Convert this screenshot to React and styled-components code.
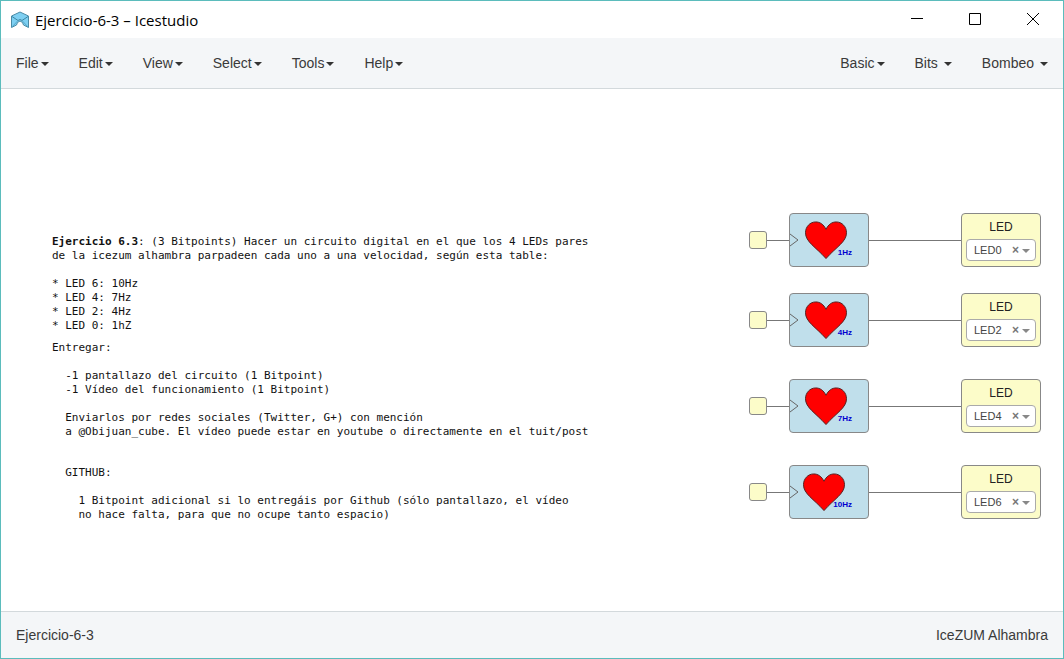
import React, { useState } from 'react';
import styled, { createGlobalStyle } from 'styled-components';

const GlobalStyle = createGlobalStyle`
  *, *::before, *::after { box-sizing: border-box; }
  body {
    margin: 0;
    background: #fff;
    color: #3a3a3a;
    font: 14px/20px "Liberation Sans", Arial, sans-serif;
  }
  button, select { font: inherit; color: inherit; }
`;

const Window = styled.div`
  display: flex;
  flex-direction: column;
  min-height: 100vh;
  border: 1px solid #5bbcbc;
`;

const TitleBar = styled.header`
  display: flex;
  align-items: center;
  height: 37px;
  padding: 0 1px 0 9px;
`;

const Title = styled.h1`
  flex: 1;
  margin: 0 0 0 5px;
  color: #000;
  font: 400 15px/22px "Open Sans", "Segoe UI", sans-serif;
`;

const WindowButton = styled.button`
  display: grid;
  place-items: center;
  align-self: flex-start;
  width: 58px;
  height: 36px;
  padding: 0;
  border: 0;
  background: none;
  color: #000;
`;

const MenuBar = styled.nav`
  display: flex;
  justify-content: space-between;
  height: 51px;
  background: #f4f6f8;
  border-bottom: 1px solid #d3d9dc;
`;

const MenuGroup = styled.div`
  display: flex;
`;

const MenuButton = styled.button`
  display: flex;
  align-items: center;
  gap: ${({ $spaced }) => ($spaced ? 6 : 2)}px;
  padding: 0 15px;
  border: 0;
  background: none;
  &::after {
    content: '';
    margin-top: 2px;
    border: 4px solid transparent;
    border-top-color: #333;
    border-bottom: 0;
  }
`;

const Canvas = styled.main`
  flex: 1;
  display: flex;
  align-items: flex-start;
  justify-content: space-between;
  gap: 40px;
  padding: 124px 22px 0 51px;
`;

const Notes = styled.article`
  padding-top: 22px;
  color: #111;
  font: 11px/14px "DejaVu Sans Mono", Consolas, monospace;
`;

const Note = styled.p`
  margin: 0 0 ${({ $gap = 0 }) => $gap}px;
  white-space: pre;
`;

const Circuit = styled.section`
  display: grid;
  gap: 32px;
`;

const Row = styled.div`
  display: flex;
  align-items: center;
  margin-bottom: ${({ $tight }) => ($tight ? -6 : 0)}px;
`;

const Port = styled.div`
  width: 18px;
  height: 18px;
  border: 1px solid #888;
  border-radius: 3px;
  background: #fcfcc9;
`;

const Wire = styled.div`
  width: ${({ $length }) => $length}px;
  height: 1px;
  background: #777;
`;

const Block = styled.div`
  display: flex;
  width: 80px;
  height: 54px;
  border: 1px solid #888;
  border-radius: 4px;
`;

const HeartBlock = styled(Block)`
  position: relative;
  align-items: center;
  background: #c0dfeb;
`;

const Heart = styled.svg`
  margin-left: ${({ $wide }) => ($wide ? 4 : 6)}px;
`;

const Frequency = styled.span`
  position: absolute;
  right: 16px;
  bottom: 8px;
  color: #0000d0;
  font: 700 8px/10px "Liberation Sans", Arial, sans-serif;
`;

const LedBlock = styled(Block)`
  flex-direction: column;
  align-items: stretch;
  padding: 3px 4px 5px;
  background: #fcfcc9;
`;

const LedLabel = styled.label`
  flex: 1;
  color: #222;
  font-size: 12px;
  line-height: 20px;
  text-align: center;
`;

const Picker = styled.div`
  position: relative;
  display: flex;
  align-items: flex-start;
  height: 22px;
  &::after {
    content: '';
    position: absolute;
    right: 6px;
    top: 10px;
    border: 4px solid transparent;
    border-top-color: #888;
    border-bottom: 0;
    pointer-events: none;
  }
`;

const PinSelect = styled.select`
  appearance: none;
  width: 100%;
  height: 22px;
  padding: 0 7px 2px;
  border: 1px solid #aaa;
  border-radius: 4px;
  background: #fff;
  color: #444;
  font-size: 11px;
`;

const ClearButton = styled.button`
  position: absolute;
  right: 17px;
  padding: 0;
  border: 0;
  background: none;
  color: #777;
  font-size: 12px;
  font-weight: 700;
  line-height: 22px;
`;

const StatusBar = styled.footer`
  display: flex;
  align-items: center;
  justify-content: space-between;
  height: 47px;
  padding: 0 15px;
  background: #f4f6f8;
  border-top: 1px solid #d3d9dc;
`;

const menus = ['File', 'Edit', 'View', 'Select', 'Tools', 'Help'];
const collections = [
  { name: 'Basic' },
  { name: 'Bits', spaced: true },
  { name: 'Bombeo', spaced: true },
];
const pins = ['LED0', 'LED1', 'LED2', 'LED3', 'LED4', 'LED5', 'LED6', 'LED7'];
const circuits = [
  { hz: '1Hz', led: 'LED0', tight: true },
  { hz: '4Hz', led: 'LED2' },
  { hz: '7Hz', led: 'LED4' },
  { hz: '10Hz', led: 'LED6', wide: true },
];

function Logo() {
  return (
    <svg width="20" height="18" viewBox="0 0 20 18" aria-hidden="true">
      <path
        d="M1.500 5 L10 1 L18.500 5 V16.500 L13.500 14 L12.500 11.500 L10 10 L7.500 11.500 L6.500 14 L1.500 16.500 Z"
        fill="#7fd0f2"
        stroke="#4a8ba6"
      />
      <path d="M2 5.500 L8 9.500 L10 8.500 L12 9.500 L18 5.500" fill="none" stroke="#3c86a3" />
      <path d="M2 16 L8 9.500 M18 16 L12 9.500" fill="none" stroke="#55a9cb" />
    </svg>
  );
}

function CircuitRow({ hz, led, tight, wide }) {
  const [pin, setPin] = useState(led);
  const id = `pin-${led}`;
  return (
    <Row $tight={tight}>
      <Port />
      <Wire $length={22} />
      <HeartBlock>
        <svg width="9" height="14" viewBox="0 0 9 14" aria-hidden="true">
          <path d="M0 1 L8 7 L0 13" fill="none" stroke="#666" />
        </svg>
        <Heart $wide={wide} width="42" height="39" viewBox="0 0 43 39" aria-hidden="true">
          <path
            d="M21.5 8 C19 3 15.500 .5 11 .5 C5 .5 .5 5.500 .5 11.500 C.5 21 11 26 21.500 38 C32 26 42.500 21 42.500 11.500 C42.500 5.500 38 .5 32 .5 C27.500 .5 24 3 21.500 8 Z"
            fill="#f00"
            stroke="#522"
          />
        </Heart>
        <Frequency>{hz}</Frequency>
      </HeartBlock>
      <Wire $length={92} />
      <LedBlock>
        <LedLabel htmlFor={id}>LED</LedLabel>
        <Picker>
          <PinSelect id={id} value={pin} onChange={(e) => setPin(e.target.value)}>
            <option value="" />
            {pins.map((name) => <option key={name}>{name}</option>)}
          </PinSelect>
          <ClearButton type="button" aria-label="Clear" onClick={() => setPin('')}>×</ClearButton>
        </Picker>
      </LedBlock>
    </Row>
  );
}

export default function App() {
  return (
    <Window>
      <GlobalStyle />
      <TitleBar>
        <Logo />
        <Title>Ejercicio-6-3 – Icestudio</Title>
        <WindowButton type="button" aria-label="Minimize">
          <svg width="12" height="12"><path d="M0 5.500H12" stroke="#000" /></svg>
        </WindowButton>
        <WindowButton type="button" aria-label="Maximize">
          <svg width="12" height="12"><path d="M.5 .5H11.500V11.500H.5Z" stroke="#000" fill="none" /></svg>
        </WindowButton>
        <WindowButton type="button" aria-label="Close">
          <svg width="12" height="12"><path d="M0 0L12 12M12 0L0 12" stroke="#000" /></svg>
        </WindowButton>
      </TitleBar>
      <MenuBar>
        <MenuGroup>
          {menus.map((name) => <MenuButton key={name} type="button">{name}</MenuButton>)}
        </MenuGroup>
        <MenuGroup>
          {collections.map(({ name, spaced }) => (
            <MenuButton key={name} type="button" $spaced={spaced}>{name}</MenuButton>
          ))}
        </MenuGroup>
      </MenuBar>
      <Canvas>
        <Notes>
          <Note>
            <b>Ejercicio 6.3</b>: (3 Bitpoints) Hacer un circuito digital en el que los 4 LEDs pares
          </Note>
          <Note $gap={14}>de la icezum alhambra parpadeen cada uno a una velocidad, según esta table:</Note>
          <Note $gap={8}>{'* LED 6: 10Hz\n* LED 4: 7Hz\n* LED 2: 4Hz\n* LED 0: 1hZ'}</Note>
          <Note $gap={14}>Entregar:</Note>
          <Note $gap={14}>{'  -1 pantallazo del circuito (1 Bitpoint)\n  -1 Vídeo del funcionamiento (1 Bitpoint)'}</Note>
          <Note $gap={27}>{'  Enviarlos por redes sociales (Twitter, G+) con mención\n  a @Obijuan_cube. El vídeo puede estar en youtube o directamente en el tuit/post'}</Note>
          <Note $gap={14}>{'  GITHUB:'}</Note>
          <Note>{'    1 Bitpoint adicional si lo entregáis por Github (sólo pantallazo, el vídeo\n    no hace falta, para que no ocupe tanto espacio)'}</Note>
        </Notes>
        <Circuit>
          {circuits.map((c) => <CircuitRow key={c.led} {...c} />)}
        </Circuit>
      </Canvas>
      <StatusBar>
        <span>Ejercicio-6-3</span>
        <span>IceZUM Alhambra</span>
      </StatusBar>
    </Window>
  );
}
